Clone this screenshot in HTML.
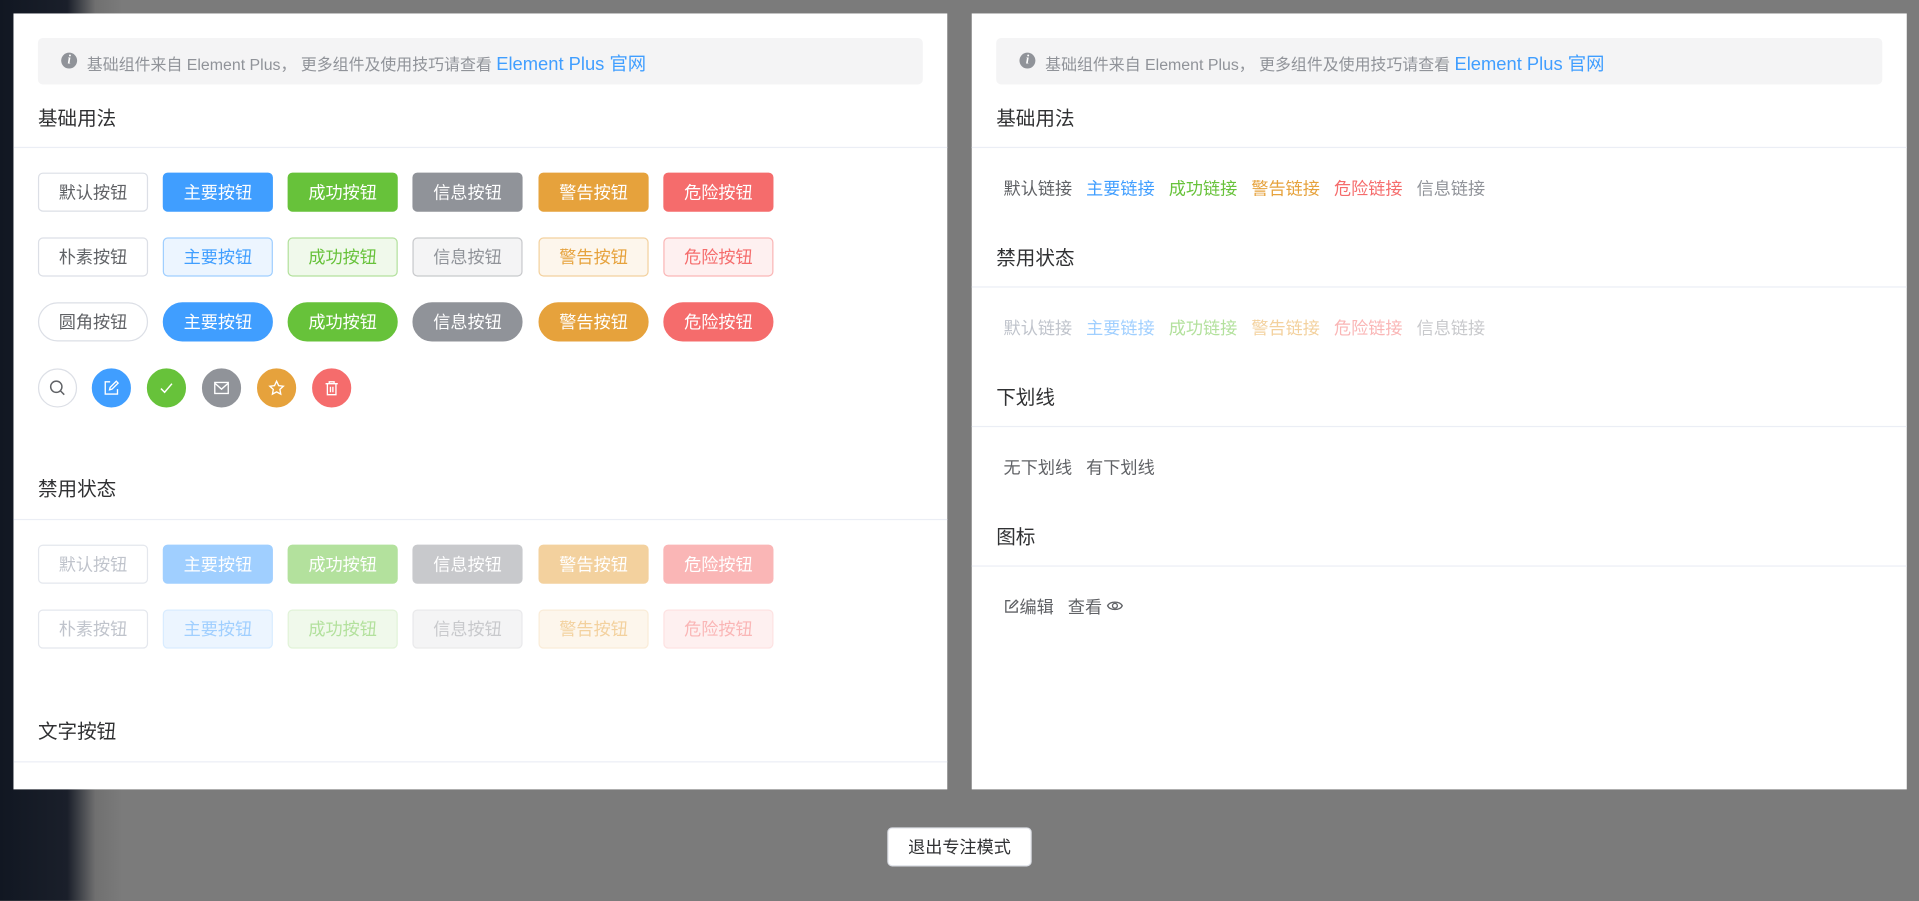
<!DOCTYPE html>
<html><head><meta charset="utf-8"><style>
*{box-sizing:border-box;margin:0;padding:0}
html,body{width:1919px;height:901px;overflow:hidden;background:#7b7b7b}
body{font-family:"Liberation Sans","Noto Sans CJK SC",sans-serif}
#w{position:absolute;left:0;top:0;width:1568px;height:736px;transform:scale(1.22385);transform-origin:0 0;background:linear-gradient(90deg,#111722 0,#1a1f2a 55px,#707070 78px,#7b7b7b 100px)}
.p{position:absolute;top:11px;height:634px;background:#fff}
.al{position:absolute;left:20px;right:20px;top:20px;height:38px;background:#f4f4f5;border-radius:4px;font-size:13px;color:#909399;line-height:44px;padding-left:40px}
.al i{position:absolute;left:19px;top:12px;width:13px;height:13px;border-radius:50%;background:#909399;color:#fff;font-size:10px;line-height:13px;text-align:center;font-style:italic;font-weight:bold;font-family:"Liberation Serif",serif}
.al a{color:#409eff;font-size:15px;text-decoration:none}
.h{position:absolute;left:20px;font-size:16px;color:#303133;line-height:20px}
.d{position:absolute;left:0;right:0;height:1px;background:#ebeef5}
.b{position:absolute;width:90px;height:32px;border-radius:4px;font-size:14px;line-height:30px;text-align:center;border:1px solid #dcdfe6;color:#606266;background:#fff}
.r{border-radius:16px}
.c{position:absolute;width:32px;height:32px;border-radius:50%;border:1px solid #dcdfe6;display:flex;align-items:center;justify-content:center}
.pr{background:#409eff;border-color:#409eff;color:#fff}
.su{background:#67c23a;border-color:#67c23a;color:#fff}
.in{background:#909399;border-color:#909399;color:#fff}
.wa{background:#e6a23c;border-color:#e6a23c;color:#fff}
.da{background:#f56c6c;border-color:#f56c6c;color:#fff}
.ppr{background:#ecf5ff;border-color:#a0cfff;color:#409eff}
.psu{background:#f0f9eb;border-color:#b3e19d;color:#67c23a}
.pin{background:#f4f4f5;border-color:#c8c9cc;color:#909399}
.pwa{background:#fdf6ec;border-color:#f3d19e;color:#e6a23c}
.pda{background:#fef0f0;border-color:#fab6b6;color:#f56c6c}
.dde{color:#c0c4cc;border-color:#e4e7ed}
.dpr{background:#a0cfff;border-color:#a0cfff;color:#fff}
.dsu{background:#b3e19d;border-color:#b3e19d;color:#fff}
.din{background:#c8c9cc;border-color:#c8c9cc;color:#fff}
.dwa{background:#f3d19e;border-color:#f3d19e;color:#fff}
.dda{background:#fab6b6;border-color:#fab6b6;color:#fff}
.dppr{background:#ecf5ff;border-color:#d9ecff;color:#a0cfff}
.dpsu{background:#f0f9eb;border-color:#e1f3d8;color:#b3e19d}
.dpin{background:#f4f4f5;border-color:#e9e9eb;color:#c8c9cc}
.dpwa{background:#fdf6ec;border-color:#faecd8;color:#f3d19e}
.dpda{background:#fef0f0;border-color:#fde2e2;color:#fab6b6}
.lk{position:absolute;left:26px;font-size:14px;line-height:20px;white-space:nowrap}
.lk span{margin-right:11.5px}
</style></head><body><div id="w">
<div class="p" style="left:11px;width:763px">
<div class="al"><i style="top:12px">i</i>基础组件来自 Element Plus， 更多组件及使用技巧请查看 <a>Element Plus 官网</a></div>
<div class="h" style="top:77px">基础用法</div><div class="d" style="top:109px"></div>
<div class="b" style="left:20px;top:130px">默认按钮</div>
<div class="b pr" style="left:122px;top:130px">主要按钮</div>
<div class="b su" style="left:224px;top:130px">成功按钮</div>
<div class="b in" style="left:326px;top:130px">信息按钮</div>
<div class="b wa" style="left:429px;top:130px">警告按钮</div>
<div class="b da" style="left:531px;top:130px">危险按钮</div>
<div class="b" style="left:20px;top:183px">朴素按钮</div>
<div class="b ppr" style="left:122px;top:183px">主要按钮</div>
<div class="b psu" style="left:224px;top:183px">成功按钮</div>
<div class="b pin" style="left:326px;top:183px">信息按钮</div>
<div class="b pwa" style="left:429px;top:183px">警告按钮</div>
<div class="b pda" style="left:531px;top:183px">危险按钮</div>
<div class="b r" style="left:20px;top:236px">圆角按钮</div>
<div class="b r pr" style="left:122px;top:236px">主要按钮</div>
<div class="b r su" style="left:224px;top:236px">成功按钮</div>
<div class="b r in" style="left:326px;top:236px">信息按钮</div>
<div class="b r wa" style="left:429px;top:236px">警告按钮</div>
<div class="b r da" style="left:531px;top:236px">危险按钮</div>
<div class="c" style="left:20px;top:290px"><svg width="14" height="14" viewBox="0 0 14 14" fill="none" stroke="#606266" stroke-width="1.2"><circle cx="6" cy="6" r="4.6"/><path d="M9.5 9.5L12.5 12.5"/></svg></div>
<div class="c pr" style="left:64px;top:290px"><svg width="14" height="14" viewBox="0 0 14 14" fill="none" stroke="#fff" stroke-width="1.1"><path d="M6 2H2v10h10V8"/><path d="M5.5 8.5l.5-2L11 1.5l1.5 1.5-5 5z"/></svg></div>
<div class="c su" style="left:109px;top:290px"><svg width="14" height="14" viewBox="0 0 14 14" fill="none" stroke="#fff" stroke-width="1.2"><path d="M2.5 7.5l3 3 6-7"/></svg></div>
<div class="c in" style="left:154px;top:290px"><svg width="14" height="14" viewBox="0 0 14 14" fill="none" stroke="#fff" stroke-width="1.1"><rect x="1.5" y="2.5" width="11" height="9"/><path d="M1.5 3l5.5 5 5.5-5"/></svg></div>
<div class="c wa" style="left:199px;top:290px"><svg width="14" height="14" viewBox="0 0 14 14" fill="none" stroke="#fff" stroke-width="1.1"><path d="M7 1.5l1.7 3.6 3.8.5-2.8 2.6.7 3.8L7 10.2 3.6 12l.7-3.8L1.5 5.6l3.8-.5z"/></svg></div>
<div class="c da" style="left:244px;top:290px"><svg width="14" height="14" viewBox="0 0 14 14" fill="none" stroke="#fff" stroke-width="1.1"><path d="M2 3.5h10M5 3.5V2h4v1.5M3.5 3.5v9h7v-9M6 6v4.5M8 6v4.5"/></svg></div>
<div class="h" style="top:380px">禁用状态</div><div class="d" style="top:413px"></div>
<div class="b dde" style="left:20px;top:434px">默认按钮</div>
<div class="b dpr" style="left:122px;top:434px">主要按钮</div>
<div class="b dsu" style="left:224px;top:434px">成功按钮</div>
<div class="b din" style="left:326px;top:434px">信息按钮</div>
<div class="b dwa" style="left:429px;top:434px">警告按钮</div>
<div class="b dda" style="left:531px;top:434px">危险按钮</div>
<div class="b dde" style="left:20px;top:487px">朴素按钮</div>
<div class="b dppr" style="left:122px;top:487px">主要按钮</div>
<div class="b dpsu" style="left:224px;top:487px">成功按钮</div>
<div class="b dpin" style="left:326px;top:487px">信息按钮</div>
<div class="b dpwa" style="left:429px;top:487px">警告按钮</div>
<div class="b dpda" style="left:531px;top:487px">危险按钮</div>
<div class="h" style="top:578px">文字按钮</div><div class="d" style="top:611px"></div>
</div>
<div class="p" style="left:794px;width:764px">
<div class="al"><i>i</i>基础组件来自 Element Plus， 更多组件及使用技巧请查看 <a>Element Plus 官网</a></div>
<div class="h" style="top:77px">基础用法</div><div class="d" style="top:109px"></div>
<div class="lk" style="top:133px"><span style="color:#606266">默认链接</span><span style="color:#409eff">主要链接</span><span style="color:#67c23a">成功链接</span><span style="color:#e6a23c">警告链接</span><span style="color:#f56c6c">危险链接</span><span style="color:#909399">信息链接</span></div>
<div class="h" style="top:191px">禁用状态</div><div class="d" style="top:223px"></div>
<div class="lk" style="top:247px"><span style="color:#c0c4cc">默认链接</span><span style="color:#a0cfff">主要链接</span><span style="color:#b3e19d">成功链接</span><span style="color:#f3d19e">警告链接</span><span style="color:#fab6b6">危险链接</span><span style="color:#c8c9cc">信息链接</span></div>
<div class="h" style="top:305px">下划线</div><div class="d" style="top:337px"></div>
<div class="lk" style="top:361px;color:#606266"><span>无下划线</span><span>有下划线</span></div>
<div class="h" style="top:419px">图标</div><div class="d" style="top:451px"></div>
<div class="lk" style="top:475px;color:#606266"><svg width="13" height="13" viewBox="0 0 14 14" fill="none" stroke="#606266" stroke-width="1.2" style="vertical-align:-1px"><path d="M6 2H2v10h10V8"/><path d="M5.5 8.5l.5-2L11 1.5l1.5 1.5-5 5z"/></svg><span>编辑</span><span style="margin-right:3px">查看</span><svg width="14" height="12" viewBox="0 0 14 12" fill="none" stroke="#606266" stroke-width="1.1" style="vertical-align:0px"><path d="M1 6c2-4 10-4 12 0-2 4-10 4-12 0z"/><circle cx="7" cy="6" r="2"/></svg></div>
</div>
<div style="position:absolute;left:725px;top:676px;width:118px;height:32px;background:#fff;border:1px solid #dcdfe6;border-radius:4px;font-size:14px;line-height:30px;text-align:center;color:#303133">退出专注模式</div>
</div></body></html>
